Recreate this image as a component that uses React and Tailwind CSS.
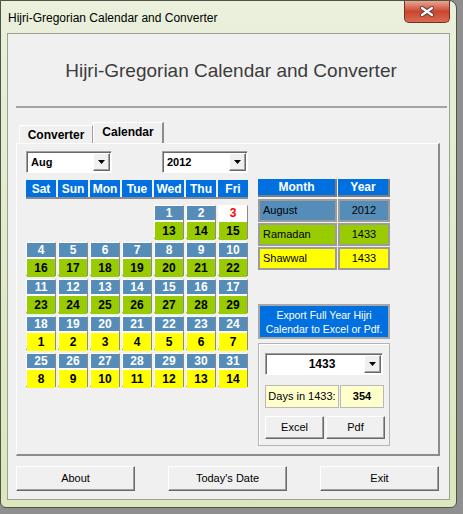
import React from "react";

const weeks = [
  [null, null, null, null, [1, 13, "g"], [2, 14, "g"], [3, 15, "g", true]],
  [[4, 16, "g"], [5, 17, "g"], [6, 18, "g"], [7, 19, "g"], [8, 20, "g"], [9, 21, "g"], [10, 22, "g"]],
  [[11, 23, "g"], [12, 24, "g"], [13, 25, "g"], [14, 26, "g"], [15, 27, "g"], [16, 28, "g"], [17, 29, "g"]],
  [[18, 1, "y"], [19, 2, "y"], [20, 3, "y"], [21, 4, "y"], [22, 5, "y"], [23, 6, "y"], [24, 7, "y"]],
  [[25, 8, "y"], [26, 9, "y"], [27, 10, "y"], [28, 11, "y"], [29, 12, "y"], [30, 13, "y"], [31, 14, "y"]],
];

const days = ["Sat", "Sun", "Mon", "Tue", "Wed", "Thu", "Fri"];

// flecha del combo
function Arrow() {
  return (
    <svg width="7" height="4" viewBox="0 0 7 4">
      <polygon points="0,0 7,0 3.5,4" fill="#000" />
    </svg>
  );
}

function Combo({ value, className, centered }) {
  return (
    <div
      className={
        "flex h-[22px] bg-white border border-t-[#a0a0a0] border-l-[#a0a0a0] border-b-white border-r-white shadow-[inset_1px_1px_0_#696969] " +
        className
      }
    >
      <div
        className={
          "flex-1 flex items-center text-[11px] font-bold text-black pl-[4px] " +
          (centered ? "justify-center text-[12px] pl-[14px]" : "")
        }
      >
        {value}
      </div>
      <div className="w-[17px] mt-[1px] mr-[1px] mb-[1px] flex items-center justify-center bg-[#f0f0f0] border border-t-white border-l-white border-r-[#696969] border-b-[#696969] shadow-[inset_-1px_-1px_0_#a0a0a0]">
        <Arrow />
      </div>
    </div>
  );
}

function WinButton({ children, className }) {
  return (
    <div
      className={
        "flex items-center justify-center bg-[#f0f0f0] text-[11px] text-black border border-t-white border-l-white border-r-[#696969] border-b-[#696969] shadow-[inset_-1px_-1px_0_#a0a0a0] " +
        className
      }
    >
      {children}
    </div>
  );
}

function DayCell({ d }) {
  if (!d) return <div className="w-[30px] h-[34px]" />;
  const [greg, hijri, color, today] = d;
  return (
    <div className="w-[30px] h-[34px] flex flex-col border-t border-l border-white border-r border-r-[#8a8a8a] border-b-2 border-b-[#8a8a8a]">
      <div
        className={
          "h-[14px] flex items-center justify-center text-[12px] font-bold " +
          (today ? "bg-white text-[#ff0000]" : "bg-[#558db8] text-white")
        }
      >
        {greg}
      </div>
      <div
        className={
          "flex-1 flex items-center justify-center border-t-2 border-white text-[12px] font-bold text-black " +
          (color === "g" ? "bg-[#99cc00]" : "bg-[#ffff00]")
        }
      >
        {hijri}
      </div>
    </div>
  );
}

function Calendar() {
  return (
    <div className="w-[222px] flex flex-col">
      <div className="flex justify-between">
        <Combo value="Aug" className="w-[86px]" />
        <Combo value="2012" className="w-[86px]" />
      </div>
      <div className="mt-[7px] flex gap-[2px] border-b-2 border-[#8a8a8a]">
        {days.map((d) => (
          <div
            key={d}
            className="w-[30px] h-[17px] bg-[#0070e0] text-white text-[12px] font-bold flex items-center justify-center"
          >
            {d}
          </div>
        ))}
      </div>
      <div className="mt-[6px] flex flex-col gap-[3px]">
        {weeks.map((w, i) => (
          <div key={i} className="flex gap-[2px]">
            {w.map((d, j) => (
              <DayCell key={j} d={d} />
            ))}
          </div>
        ))}
      </div>
    </div>
  );
}

function SidePanel() {
  const rows = [
    ["August", "2012", "bg-[#558db8]"],
    ["Ramadan", "1433", "bg-[#99cc00]"],
    ["Shawwal", "1433", "bg-[#ffff00]"],
  ];
  return (
    <div className="w-[132px] ml-[10px] flex flex-col">
      {/* tabla mes / año */}
      <div className="mt-[28px] flex gap-[1px]">
        <div className="w-[79px] h-[18px] bg-[#0070e0] text-white text-[12px] font-bold flex items-center justify-center border-r-2 border-b-2 border-[#7d7d7d]">
          Month
        </div>
        <div className="w-[52px] h-[18px] bg-[#0070e0] text-white text-[12px] font-bold flex items-center justify-center border-r-2 border-b-2 border-[#7d7d7d]">
          Year
        </div>
      </div>
      <div className="mt-[2px] flex flex-col gap-[1px]">
        {rows.map(([m, y, bg]) => (
          <div key={m} className="flex gap-[1px]">
            <div className={"w-[79px] h-[23px] flex items-center pl-[3px] text-[11px] text-black border-2 border-[#9c9c9c] " + bg}>
              {m}
            </div>
            <div className={"w-[52px] h-[23px] flex items-center justify-center text-[11px] text-black border-2 border-[#9c9c9c] " + bg}>
              {y}
            </div>
          </div>
        ))}
      </div>

      <div className="mt-[34px] h-[35px] bg-[#0070e0] border-2 border-[#a8a8a8] flex flex-col items-center justify-center text-white text-[10.5px] leading-[14px]">
        <span>Export Full Year Hijri</span>
        <span>Calendar to Excel or Pdf.</span>
      </div>

      <div className="mt-[4px] h-[103px] border border-[#b4b4b4] shadow-[inset_1px_1px_0_#fff] flex flex-col pl-[6px] pt-[9px]">
        <Combo value="1433" className="w-[118px]" centered />
        <div className="mt-[10px] flex gap-[1px]">
          <div className="w-[74px] h-[23px] bg-[#ffffcc] border border-[#b8b8b8] flex items-center justify-center text-[11px] text-black">
            Days in 1433:
          </div>
          <div className="w-[44px] h-[23px] bg-[#ffffcc] border border-[#b8b8b8] flex items-center justify-center text-[11px] font-bold text-black">
            354
          </div>
        </div>
        <div className="mt-[8px] flex gap-[2px]">
          <WinButton className="w-[59px] h-[23px]">Excel</WinButton>
          <WinButton className="w-[59px] h-[23px]">Pdf</WinButton>
        </div>
      </div>
    </div>
  );
}

export default function App() {
  return (
    <div className="w-[463px] h-[514px] overflow-hidden bg-[#8f8f8f] font-['Liberation_Sans',Arial,sans-serif]">
      <div className="w-[457px] h-[508px] flex flex-col rounded-tr-[8px] rounded-b-[6px] border border-[#4d5546] bg-linear-to-b from-[#eaf0dc] via-[#e2eacb] to-[#dce7bd]">
        {/* barra de título */}
        <div className="h-[32px] flex items-start">
          <span className="mt-[10px] pl-[7px] text-[12px] leading-[14px] text-black">
            Hijri-Gregorian Calendar and Converter
          </span>
          <div className="ml-auto mr-[6px] w-[46px] h-[22px] flex items-center justify-center rounded-b-[5px] border border-t-0 border-[#6b3328] bg-linear-to-b from-[#e9a592] via-[#c9452d] to-[#dc6a52]">
            <svg width="16" height="11" viewBox="0 0 16 11">
              <path d="M3 2 L13 9 M13 2 L3 9" stroke="#5a3a3a" strokeWidth="4" strokeLinecap="round" />
              <path d="M3 2 L13 9 M13 2 L3 9" stroke="#ffffff" strokeWidth="2.2" strokeLinecap="round" />
            </svg>
          </div>
        </div>

        {/* área cliente */}
        <div className="ml-[6px] w-[443px] h-[467px] bg-[#f0f0f0] border border-[#9aa38f] flex flex-col">
          <div className="pt-[26px] pl-[5px] text-center text-[19px] leading-[22px] text-[#3c3c3c]">
            Hijri-Gregorian Calendar and Converter
          </div>
          <div className="mt-[24px] ml-[8px] w-[431px] border-t-2 border-[#a3a3a3]" />

          {/* pestañas */}
          <div className="mt-[14px] ml-[11px] flex items-end h-[21px]">
            <div className="w-[74px] h-[18px] flex items-center justify-center text-[12px] font-bold text-black border border-b-0 border-t-white border-l-white border-r-[#a0a0a0] bg-[#f0f0f0]">
              Converter
            </div>
            <div className="w-[71px] h-[21px] pb-[2px] flex items-center justify-center text-[12px] font-bold text-black border-t border-l border-r-2 border-t-white border-l-white border-r-[#8c8c8c] bg-[#f0f0f0]">
              Calendar
            </div>
          </div>

          <div className="ml-[8px] w-[424px] h-[313px] flex pl-[9px] pt-[7px] border-t border-l border-white border-r-2 border-b-2 border-r-[#8c8c8c] border-b-[#8c8c8c]">
            <Calendar />
            <SidePanel />
          </div>

          {/* botones inferiores */}
          <div className="mt-[10px] ml-[8px] flex gap-[33px]">
            <WinButton className="w-[119px] h-[25px]">About</WinButton>
            <WinButton className="w-[119px] h-[25px]">Today's Date</WinButton>
            <WinButton className="w-[119px] h-[25px]">Exit</WinButton>
          </div>
        </div>
      </div>
    </div>
  );
}
